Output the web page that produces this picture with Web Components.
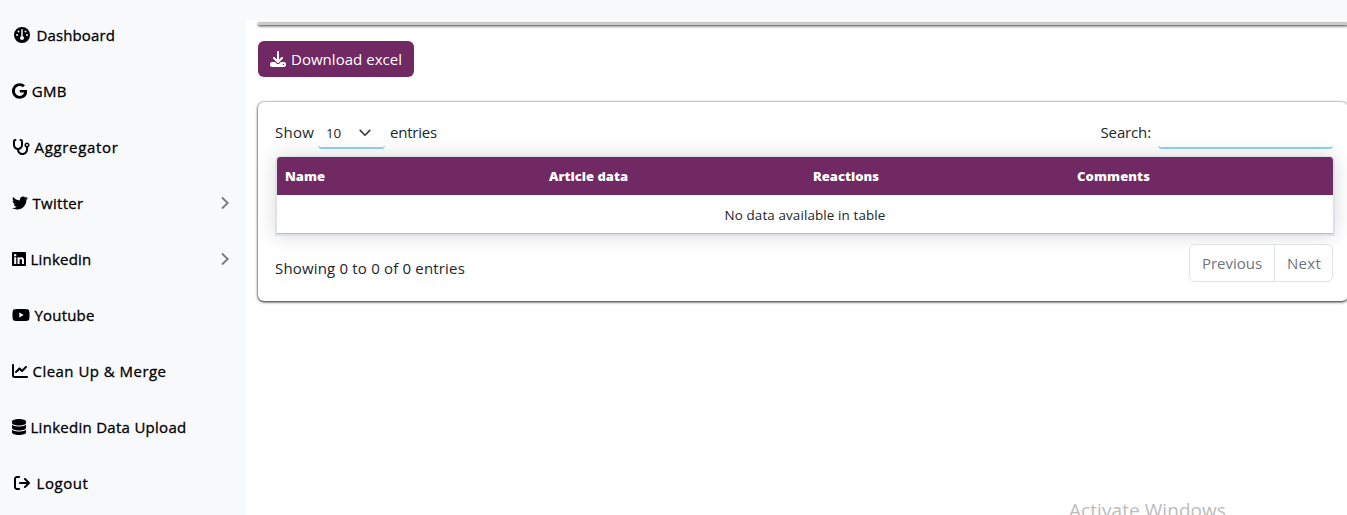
<!DOCTYPE html>
<html lang="en">
<head>
<meta charset="utf-8">
<title>Dashboard</title>
<style>
html,body{margin:0;height:100%;overflow:hidden}
body{font-family:"Open Sans","Noto Sans",sans-serif;font-size:15px;color:#212529;background:#f8f9fb}
</style>
</head>
<body>
<app-shell>
  <nav-item slot="nav" icon="gauge" indent="2" fit="78.5">Dashboard</nav-item>
  <nav-item slot="nav" icon="google" fit="35">GMB</nav-item>
  <nav-item slot="nav" icon="stethoscope" fit="84">Aggregator</nav-item>
  <nav-item slot="nav" icon="twitter" fit="51" more>Twitter</nav-item>
  <nav-item slot="nav" icon="linkedin" fit="61" more>Linkedin</nav-item>
  <nav-item slot="nav" icon="youtube" fit="60">Youtube</nav-item>
  <nav-item slot="nav" icon="chart" fit="134">Clean Up &amp; Merge</nav-item>
  <nav-item slot="nav" icon="database" fit="156">Linkedin Data Upload</nav-item>
  <nav-item slot="nav" icon="logout" indent="2" fit="52">Logout</nav-item>
  <panel-card class="thin"></panel-card>
  <download-button>Download excel</download-button>
  <panel-card><data-table></data-table></panel-card>
</app-shell>
<script>
const ICONS={
gauge:[512,"M0 256a256 256 0 1 1 512 0A256 256 0 1 1 0 256zm320 96c0-26.9-16.5-49.9-40-59.3V88c0-13.3-10.7-24-24-24s-24 10.7-24 24V292.7c-23.5 9.5-40 32.5-40 59.3c0 35.3 28.7 64 64 64s64-28.7 64-64zM144 176a32 32 0 1 0 0-64 32 32 0 1 0 0 64zm-16 80a32 32 0 1 0 -64 0 32 32 0 1 0 64 0zm288 32a32 32 0 1 0 0-64 32 32 0 1 0 0 64zM400 144a32 32 0 1 0 -64 0 32 32 0 1 0 64 0z"],
google:[488,"M488 261.8C488 403.3 391.1 504 248 504 110.8 504 0 393.2 0 256S110.8 8 248 8c66.8 0 123 24.5 166.3 64.9l-67.5 64.9C258.5 52.6 94.3 116.6 94.3 256c0 86.5 69.1 156.6 153.7 156.6 98.2 0 135-70.4 140.8-106.9H248v-85.3h236.1c2.3 12.7 3.9 24.9 3.9 41.4z"],
stethoscope:[576,"M142.4 21.9c5.6 16.8-3.5 34.9-20.2 40.5L96 71.1V192c0 53 43 96 96 96s96-43 96-96V71.1l-26.1-8.7c-16.8-5.6-25.8-23.7-20.2-40.5s23.7-25.8 40.5-20.2l26.1 8.7C334.4 19.1 352 43.5 352 71.1V192c0 77.2-54.6 141.6-127.3 156.7C231 404.6 278.4 448 336 448c61.9 0 112-50.1 112-112V265.3c-28.3-12.3-48-40.5-48-73.3c0-44.2 35.8-80 80-80s80 35.8 80 80c0 32.8-19.7 61-48 73.3V336c0 97.2-78.8 176-176 176c-92.9 0-168.9-71.9-175.5-163.1C87.2 334.2 32 269.6 32 192V71.1c0-27.5 17.6-52 43.8-60.7l26.1-8.7c16.8-5.6 34.9 3.5 40.5 20.2zM480 224a32 32 0 1 0 0-64 32 32 0 1 0 0 64z"],
twitter:[512,"M459.37 151.716c.325 4.548.325 9.097.325 13.645 0 138.72-105.583 298.558-298.558 298.558-59.452 0-114.68-17.219-161.137-47.106 8.447.974 16.568 1.299 25.34 1.299 49.055 0 94.213-16.568 130.274-44.832-46.132-.975-84.792-31.188-98.112-72.772 6.498.974 12.995 1.624 19.818 1.624 9.421 0 18.843-1.3 27.614-3.573-48.081-9.747-84.143-51.98-84.143-102.985v-1.299c13.969 7.797 30.214 12.67 47.431 13.319-28.264-18.843-46.781-51.005-46.781-87.391 0-19.492 5.197-37.36 14.294-52.954 51.655 63.675 129.3 105.258 216.365 109.807-1.624-7.797-2.599-15.918-2.599-24.04 0-57.828 46.782-104.934 104.934-104.934 30.213 0 57.502 12.67 76.67 33.137 23.715-4.548 46.456-13.32 66.599-25.34-7.798 24.366-24.366 44.833-46.132 57.827 21.117-2.273 41.584-8.122 60.426-16.243-14.292 20.791-32.161 39.308-52.628 54.253z"],
linkedin:[448,"M416 32H31.9C14.3 32 0 46.5 0 64.3v383.4C0 465.5 14.3 480 31.9 480H416c17.6 0 32-14.5 32-32.3V64.3c0-17.8-14.4-32.3-32-32.3zM135.4 416H69V202.2h66.5V416zm-33.2-243c-21.3 0-38.5-17.3-38.5-38.5S80.9 96 102.2 96c21.2 0 38.5 17.3 38.5 38.5 0 21.3-17.2 38.5-38.5 38.5zm282.1 243h-66.4V312c0-24.8-.5-56.7-34.5-56.7-34.6 0-39.9 27-39.9 54.9V416h-66.4V202.2h63.7v29.2h.9c8.9-16.8 30.6-34.5 62.9-34.5 67.2 0 79.7 44.3 79.7 101.9V416z"],
youtube:[576,"M549.655 124.083c-6.281-23.65-24.787-42.276-48.284-48.597C458.781 64 288 64 288 64S117.22 64 74.629 75.486c-23.497 6.322-42.003 24.947-48.284 48.597-11.412 42.867-11.412 132.305-11.412 132.305s0 89.438 11.412 132.305c6.281 23.65 24.787 41.5 48.284 47.821C117.22 448 288 448 288 448s170.78 0 213.371-11.486c23.497-6.321 42.003-24.171 48.284-47.821 11.412-42.867 11.412-132.305 11.412-132.305s0-89.438-11.412-132.305zm-317.51 213.508V175.185l142.739 81.205-142.739 81.201z"],
chart:[512,"M64 64c0-17.7-14.3-32-32-32S0 46.3 0 64V400c0 44.2 35.8 80 80 80H480c17.7 0 32-14.3 32-32s-14.3-32-32-32H80c-8.8 0-16-7.2-16-16V64zm406.6 86.6c12.5-12.5 12.5-32.8 0-45.3s-32.8-12.5-45.3 0L320 210.7l-57.4-57.4c-12.5-12.5-32.8-12.5-45.3 0l-112 112c-12.5 12.5-12.5 32.8 0 45.3s32.8 12.5 45.3 0L240 221.3l57.4 57.4c12.5 12.5 32.8 12.5 45.3 0l128-128z"],
database:[448,"M448 80v48c0 44.2-100.3 80-224 80S0 172.2 0 128V80C0 35.8 100.3 0 224 0S448 35.8 448 80zM393.2 214.7c20.8-7.4 39.9-16.9 54.8-28.6V288c0 44.2-100.3 80-224 80S0 332.2 0 288V186.1c14.9 11.8 34 21.2 54.8 28.6C99.7 230.7 159.5 240 224 240s124.3-9.3 169.2-25.3zM0 346.1c14.9 11.8 34 21.2 54.8 28.6C99.7 390.7 159.5 400 224 400s124.3-9.3 169.2-25.3c20.8-7.4 39.9-16.9 54.8-28.6V432c0 44.2-100.3 80-224 80S0 476.2 0 432V346.1z"],
logout:[512,"M502.6 278.6c12.5-12.5 12.5-32.8 0-45.3l-128-128c-12.5-12.5-32.8-12.5-45.3 0s-12.5 32.8 0 45.3L402.7 224 192 224c-17.7 0-32 14.3-32 32s14.3 32 32 32l210.7 0-73.4 73.4c-12.5 12.5-12.5 32.8 0 45.3s32.8 12.5 45.3 0l128-128zM160 96c17.7 0 32-14.3 32-32s-14.3-32-32-32L96 32C43 32 0 75 0 128L0 384c0 53 43 96 96 96l64 0c17.7 0 32-14.3 32-32s-14.3-32-32-32l-64 0c-17.7 0-32-14.3-32-32l0-256c0-17.7 14.3-32 32-32l64 0z"],
download:[512,"M288 32c0-17.7-14.3-32-32-32s-32 14.3-32 32V274.7l-73.4-73.4c-12.5-12.5-32.8-12.5-45.3 0s-12.5 32.8 0 45.3l128 128c12.5 12.5 32.8 12.5 45.3 0l128-128c12.5-12.5 12.5-32.8 0-45.3s-32.8-12.5-45.3 0L288 274.7V32zM64 352c-35.3 0-64 28.7-64 64v32c0 35.3 28.7 64 64 64H448c35.3 0 64-28.7 64-64V416c0-35.3-28.7-64-64-64H346.5l-45.3 45.3c-25 25-65.5 25-90.5 0L165.5 352H64zm368 56a24 24 0 1 1 0 48 24 24 0 1 1 0-48z"]
};
const svg=n=>`<svg viewBox="0 0 ${ICONS[n][0]} 512" width="${ICONS[n][0]/32}" height="16" fill="currentColor"><path d="${ICONS[n][1]}"/></svg>`;
const define=(name,render)=>customElements.define(name,class extends HTMLElement{
  constructor(){super();this.attachShadow({mode:"open"})}
  connectedCallback(){this.shadowRoot.innerHTML=render(this)}
});

/* Text run whose tracking is adjusted so that it spans the given width. */
customElements.define("fit-text",class extends HTMLElement{
  constructor(){super();this.attachShadow({mode:"open"}).innerHTML="<style>:host{display:inline-block;white-space:nowrap;flex:none}</style><slot></slot>"}
  connectedCallback(){
    const w=+this.getAttribute("w"),n=this.textContent.length;
    this.style.letterSpacing="0px";
    const natural=this.getBoundingClientRect().width;
    if(natural&&w)this.style.letterSpacing=((w-natural)/n).toFixed(3)+"px";
  }
});

define("app-shell",()=>`<style>
:host{display:grid;grid-template-columns:246px 1fr;height:515px;overflow:hidden}
nav{padding-top:7px;color:#000}
main{margin-top:20px;background:#fff;padding:3px 0 0 12px;display:flex;flex-direction:column;align-items:flex-start;overflow:hidden;position:relative}
.mark{position:absolute;left:823px;top:478px;font-size:19px;line-height:24px;color:#bcbcbc}
</style><nav><slot name="nav"></slot></nav><main><slot></slot><div class="mark"><fit-text w="157">Activate Windows</fit-text></div></main>`);

define("nav-item",e=>`<style>
:host{display:flex;align-items:center;height:56px;padding:0 16px 0 ${12+ +(e.getAttribute("indent")||0)}px}
.i{display:flex;margin-right:${e.hasAttribute("indent")?6.5:4.5}px}
fit-text{-webkit-text-stroke:.3px #000}
.c{margin-left:auto}
</style><span class="i">${svg(e.getAttribute("icon"))}</span><fit-text w="${e.getAttribute("fit")}">${e.innerHTML}</fit-text>
${e.hasAttribute("more")?'<svg class="c" width="10" height="14" viewBox="0 0 10 14" fill="none" stroke="#7c7c7c" stroke-width="1.9"><path d="M2 1.5 7.7 7 2 12.5"/></svg>':""}`);

define("panel-card",()=>`<style>
:host{display:block;box-sizing:border-box;width:1090px;height:199px;border-radius:6px;background:#fff;box-shadow:0 1px 3px rgba(0,0,0,.85),0 0 2px rgba(0,0,0,.4);padding:14px 15px 0 17px}
:host(.thin){height:2px;padding:0;border-radius:2px;background:#ccc}
</style><slot></slot>`);

define("download-button",e=>`<style>
:host{display:flex;align-items:center;box-sizing:border-box;width:156px;height:36px;margin:16px 0 25px;padding-left:12px;gap:5px;border-radius:6px;background:#702963;color:#fff}
svg{display:block}
</style>${svg("download")}<fit-text w="111">${e.textContent}</fit-text>`);

define("data-table",()=>`<style>
:host{display:block}
.top,.foot{display:flex;justify-content:space-between}
.top{height:33px}
.top>div{display:flex;line-height:32px}
.select{box-sizing:border-box;width:67px;height:33px;margin:0 5px 0 4px;padding:0 14px 0 8px;display:flex;align-items:center;justify-content:space-between;font-size:13.4px;border-bottom:2px solid #87cee6;border-radius:4px}
.select fit-text,.select svg{position:relative;top:1px}
input{box-sizing:border-box;width:175px;height:33px;margin:0 0 0 7px;padding:0;border:0;border-bottom:2px solid #87cee6;border-radius:4px;background:none}
.table{box-sizing:border-box;width:1060px;height:80px;margin:7px 0 0;border:2px solid #dee2e6;border-top-width:1px;border-radius:5px 5px 0 0;box-shadow:0 0 20px rgba(0,0,0,.15);background:#fff;overflow:hidden}
.head{display:grid;grid-template-columns:repeat(4,264px);height:38px;line-height:38px;background:#702963;color:#fff;font-weight:800;font-size:13px}
.head fit-text{margin-left:8px;justify-self:start}
.row{height:38px;line-height:40px;border-bottom:1px solid #87cee6;text-align:center;font-size:13.4px}
.foot{padding-top:8px}
.info{line-height:48px}
.pager{display:flex;box-sizing:border-box;height:38px;border:1px solid #dee2e6;border-radius:6px;color:#6c757d;line-height:37px;background:#fff}
.pager span{box-sizing:border-box;padding-left:12px;width:84px}
.pager span+span{border-left:1px solid #dee2e6;width:58px}
</style>
<div class="top"><div><fit-text w="39">Show</fit-text><span class="select"><fit-text w="15">10</fit-text><svg width="12" height="8" viewBox="0 0 12 8" fill="none" stroke="#343a40" stroke-width="1.6" stroke-linecap="round" stroke-linejoin="round"><path d="M1.2 1.4 6 6.2 10.8 1.4"/></svg></span><fit-text w="47">entries</fit-text></div>
<div><fit-text w="50.5">Search:</fit-text><input aria-label="Search"></div></div>
<div class="table"><div class="head"><fit-text w="40">Name</fit-text><fit-text w="79">Article data</fit-text><fit-text w="66">Reactions</fit-text><fit-text w="73">Comments</fit-text></div>
<div class="row"><fit-text w="161">No data available in table</fit-text></div></div>
<div class="foot"><div class="info"><fit-text w="190">Showing 0 to 0 of 0 entries</fit-text></div>
<div class="pager"><span><fit-text w="60">Previous</fit-text></span><span><fit-text w="34">Next</fit-text></span></div></div>`);
</script>
</body>
</html>
